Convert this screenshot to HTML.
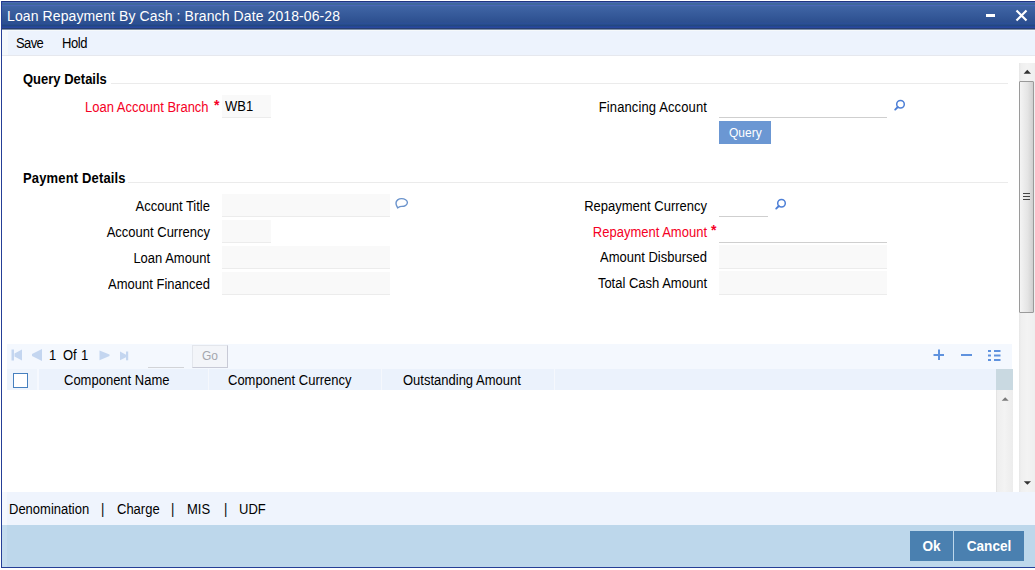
<!DOCTYPE html>
<html><head><meta charset="utf-8">
<style>
html,body{margin:0;padding:0;}
body{width:1035px;height:570px;position:relative;overflow:hidden;background:#fff;font-family:"Liberation Sans",sans-serif;font-size:13px;color:#000;-webkit-text-stroke:0;}
.a{position:absolute;white-space:nowrap;}
.t{position:absolute;white-space:nowrap;line-height:13px;font-size:13px;transform:scaleY(1.1);transform-origin:0 11px;}
.lbl{position:absolute;white-space:nowrap;line-height:13px;font-size:13px;text-align:right;transform:scaleY(1.1);transform-origin:0 11px;}
.red{color:#f50025;}
.ast{position:absolute;line-height:13px;font-size:14px;font-weight:bold;color:#f50025;}
.ro{position:absolute;background:#f9f9f9;border-bottom:1px solid #ececec;box-sizing:border-box;}
.ed{position:absolute;background:#fff;border-bottom:1px solid #cfcfcf;box-sizing:border-box;}
</style></head>
<body>
<!-- window frame -->
<div class="a" style="left:1px;top:1px;width:1034px;height:567px;background:#fff;"></div>
<!-- title bar -->
<div class="a" style="left:1px;top:1px;width:1034px;height:29px;background:linear-gradient(#1f3580 0px,#1f3580 1px,#4a6ab8 1px,#4a6ab8 2px,#3f689c 2px,#3f689c 4px,#4a66b8 4px,#4a66b8 5px,#4068a4 5px,#3f64a4 6px,#2d5090 21px,#2a4f98 23px,#254a80 24px,#214585 25px,#2848a0 26px,#2848a0 27px,#283f70 27px,#283f70 28px,#7f90a8 28px,#7f90a8 29px);"></div>
<div class="a" style="left:7px;top:9px;font-size:14px;line-height:14px;color:#fff;letter-spacing:0.1px;-webkit-text-stroke:0;">Loan Repayment By Cash : Branch Date 2018-06-28</div>
<div class="a" style="left:986px;top:14px;width:9px;height:3px;background:#fff;"></div>
<svg class="a" style="left:1015px;top:9px;" width="13" height="13" viewBox="0 0 13 13"><path d="M1.5 1.5 L11.5 11.5 M11.5 1.5 L1.5 11.5" stroke="#fff" stroke-width="2.2"/></svg>
<!-- menu bar -->
<div class="a" style="left:2px;top:30px;width:1033px;height:1px;background:#f6f9fb;"></div>
<div class="a" style="left:2px;top:31px;width:1033px;height:24px;background:#edf3fd;"></div>
<div class="a" style="left:2px;top:31px;width:6px;height:25px;background:#f4f8fb;"></div>
<div class="a" style="left:2px;top:55px;width:1033px;height:1px;background:#e6e8ee;"></div>
<div class="t" style="left:16px;top:37px;letter-spacing:-0.6px;">Save</div>
<div class="t" style="left:62px;top:37px;letter-spacing:-0.4px;">Hold</div>
<!-- left border -->
<div class="a" style="left:1px;top:1px;width:1px;height:567px;background:#253f96;"></div>
<div class="a" style="left:1px;top:567px;width:1034px;height:1px;background:#253f96;"></div>

<!-- Query Details -->
<div class="t" style="left:23px;top:73px;font-weight:bold;">Query Details</div>
<div class="a" style="left:111px;top:83px;width:897px;height:1px;background:#ebebeb;"></div>
<div class="lbl red" style="left:85px;top:101px;">Loan Account Branch</div>
<div class="ast" style="left:214px;top:99px;">*</div>
<div class="ro" style="left:222px;top:95px;width:49px;height:23px;"></div>
<div class="t" style="left:225px;top:100px;">WB1</div>

<div class="lbl" style="right:328px;top:101px;letter-spacing:0.12px;">Financing Account</div>
<div class="ed" style="left:719px;top:95px;width:168px;height:23px;"></div>
<svg class="a" style="left:891px;top:98px;" width="16" height="16" viewBox="0 0 16 16"><circle cx="9.5" cy="6.3" r="3.8" fill="none" stroke="#4d7fd6" stroke-width="1.5"/><path d="M6.8 9 L4.2 11.6" stroke="#4d7fd6" stroke-width="1.9" stroke-linecap="round"/></svg>
<div class="a" style="left:719px;top:121px;width:52px;height:23px;background:#6b97d3;"></div>
<div class="a" style="left:729px;top:127px;font-size:12px;line-height:12px;color:#fff;-webkit-text-stroke:0;">Query</div>

<!-- Payment Details -->
<div class="t" style="left:23px;top:172px;font-weight:bold;letter-spacing:0.15px;">Payment Details</div>
<div class="a" style="left:128px;top:182px;width:880px;height:1px;background:#ebebeb;"></div>

<div class="lbl" style="right:825px;top:200px;">Account Title</div>
<div class="lbl" style="right:825px;top:226px;">Account Currency</div>
<div class="lbl" style="right:825px;top:252px;">Loan Amount</div>
<div class="lbl" style="right:825px;top:278px;">Amount Financed</div>
<div class="ro" style="left:222px;top:194px;width:168px;height:23px;"></div>
<div class="ro" style="left:222px;top:220px;width:49px;height:23px;"></div>
<div class="ro" style="left:222px;top:246px;width:168px;height:23px;"></div>
<div class="ro" style="left:222px;top:272px;width:168px;height:23px;"></div>
<svg class="a" style="left:392px;top:195px;" width="18" height="16" viewBox="0 0 18 16"><path d="M5.6 12.8 C5.2 11.6 4 10.6 4 8 C4 5.6 6.6 3.6 9.6 3.6 C12.6 3.6 15.4 5.4 15.4 7.6 C15.4 9.8 12.8 11.4 9.8 11.4 C8.4 11.4 7.4 11.8 5.6 12.8 Z" fill="none" stroke="#6a93cc" stroke-width="1.4"/></svg>

<div class="lbl" style="right:328px;top:200px;">Repayment Currency</div>
<div class="lbl red" style="right:328px;top:226px;">Repayment Amount</div>
<div class="ast" style="left:711px;top:224px;">*</div>
<div class="lbl" style="right:328px;top:251px;">Amount Disbursed</div>
<div class="lbl" style="right:328px;top:277px;">Total Cash Amount</div>
<div class="ed" style="left:719px;top:194px;width:49px;height:23px;"></div>
<svg class="a" style="left:772px;top:197px;" width="16" height="16" viewBox="0 0 16 16"><circle cx="9.5" cy="6.3" r="3.8" fill="none" stroke="#4d7fd6" stroke-width="1.5"/><path d="M6.8 9 L4.2 11.6" stroke="#4d7fd6" stroke-width="1.9" stroke-linecap="round"/></svg>
<div class="ed" style="left:719px;top:220px;width:168px;height:23px;"></div>
<div class="ro" style="left:719px;top:245px;width:168px;height:24px;"></div>
<div class="ro" style="left:719px;top:271px;width:168px;height:24px;"></div>

<!-- outer scrollbar -->
<div class="a" style="left:1019px;top:63px;width:16px;height:429px;background:linear-gradient(90deg,#e6e6e6 0,#efefef 2px,#f3f3f3 50%,#efefef 100%);"></div>
<svg class="a" style="left:1022px;top:67px;" width="10" height="8" viewBox="0 0 10 8"><path d="M1.6 6.8 L5.3 2.8 L9 6.8 Z" fill="#333"/></svg>
<div class="a" style="left:1019px;top:81px;width:15px;height:232px;box-sizing:border-box;border:1px solid #9a9a9a;border-radius:1px;background:linear-gradient(90deg,#f4f4f4,#e4e4e4 60%,#cfcfcf);"></div>
<div class="a" style="left:1023px;top:193px;width:7px;height:1px;background:#444;"></div>
<div class="a" style="left:1023px;top:196px;width:7px;height:1px;background:#444;"></div>
<div class="a" style="left:1023px;top:199px;width:7px;height:1px;background:#444;"></div>
<svg class="a" style="left:1022px;top:479px;" width="10" height="8" viewBox="0 0 10 8"><path d="M1.8 2.2 L5.4 5.8 L9 2.2 Z" fill="#333"/></svg>

<!-- grid toolbar -->
<div class="a" style="left:7px;top:344px;width:1005px;height:25px;background:#f4f8fe;"></div>
<svg class="a" style="left:0px;top:340px;" width="140" height="25" viewBox="0 340 140 25">
<g fill="#c4d6f0"><rect x="11.5" y="349.5" width="2.5" height="11"/><path d="M22 349.5 L22 360.5 L14.5 356.5 L14.5 353.5 Z"/><path d="M42 349 L42 361 L32 356 L32 354 Z"/><path d="M99.5 350.5 L109.5 354.5 L109.5 356 L99.5 360.3 Z"/><path d="M120 351.5 L126.5 355 L126.5 357 L120 360.3 Z"/><rect x="126" y="351.5" width="2.2" height="8.8"/></g></svg>
<div class="t" style="left:49px;top:349px;">1</div>
<div class="t" style="left:63px;top:349px;">Of</div>
<div class="t" style="left:81px;top:349px;">1</div>
<div class="a" style="left:148px;top:345px;width:36px;height:23px;border-bottom:1px solid #d2d4d8;box-sizing:border-box;"></div>
<div class="a" style="left:192px;top:345px;width:36px;height:23px;box-sizing:border-box;border:1px solid #e3e6ec;border-right-color:#c8cad6;border-bottom-color:#c8cad6;background:#f3f5f9;"></div>
<div class="t" style="left:202px;top:350px;color:#a4a6ae;font-size:12px;">Go</div>
<svg class="a" style="left:930px;top:347px;" width="75" height="16" viewBox="0 0 75 16">
<g fill="#5f92de"><rect x="3.5" y="7" width="10.5" height="2"/><rect x="8" y="2.5" width="2" height="10.5"/><rect x="31" y="7" width="11" height="2"/>
<rect x="58" y="3" width="3" height="2"/><rect x="64" y="3" width="6.5" height="2"/><rect x="58" y="7.5" width="3" height="2"/><rect x="64" y="7.5" width="6.5" height="2"/><rect x="58" y="12" width="3" height="2"/><rect x="64" y="12" width="6.5" height="2"/></g></svg>
<!-- grid header -->
<div class="a" style="left:7px;top:369px;width:989px;height:21px;background:#ebf2fc;"></div>
<div class="a" style="left:7px;top:369px;width:30px;height:21px;background:#eef4fc;"></div>
<div class="a" style="left:37px;top:369px;width:2px;height:21px;background:#f6f9fe;"></div>
<div class="a" style="left:208px;top:369px;width:1px;height:21px;background:#f5f8fd;"></div>
<div class="a" style="left:381px;top:369px;width:1px;height:21px;background:#f5f8fd;"></div>
<div class="a" style="left:554px;top:369px;width:1px;height:21px;background:#f5f8fd;"></div>
<div class="a" style="left:13px;top:373px;width:15px;height:15px;box-sizing:border-box;border:1px solid #4680bf;background:#fff;"></div>
<div class="t" style="left:64px;top:374px;">Component Name</div>
<div class="t" style="left:228px;top:374px;">Component Currency</div>
<div class="t" style="left:403px;top:374px;">Outstanding Amount</div>
<div class="a" style="left:996px;top:369px;width:17px;height:21px;background:#c9d9e1;"></div>
<!-- inner scrollbar -->
<div class="a" style="left:996px;top:390px;width:17px;height:102px;background:linear-gradient(90deg,#e4e4e4 0,#e4e4e4 1px,#eeeeee 1px,#f3f3f3 50%,#ececec 100%);"></div>
<svg class="a" style="left:1000px;top:395px;" width="10" height="8" viewBox="0 0 10 8"><path d="M1.7 5.8 L5.2 2.3 L8.7 5.8 Z" fill="#7a7a7a"/></svg>

<!-- bottom tabs -->
<div class="a" style="left:2px;top:492px;width:1033px;height:33px;background:#eff4fd;"></div>
<div class="a" style="left:2px;top:492px;width:5px;height:33px;background:#f5f8fd;"></div>
<div class="t" style="left:9px;top:503px;">Denomination</div>
<div class="t" style="left:101px;top:503px;">|</div>
<div class="t" style="left:117px;top:503px;">Charge</div>
<div class="t" style="left:171px;top:503px;">|</div>
<div class="t" style="left:187px;top:503px;">MIS</div>
<div class="t" style="left:224px;top:503px;">|</div>
<div class="t" style="left:239px;top:503px;">UDF</div>
<!-- footer -->
<div class="a" style="left:2px;top:525px;width:1033px;height:42px;background:#bdd7eb;"></div>
<div class="a" style="left:2px;top:525px;width:5px;height:42px;background:#c4dcee;"></div>
<div class="a" style="left:910px;top:531px;width:43px;height:30px;background:#4a80b0;"></div>
<div class="a" style="left:954px;top:531px;width:70px;height:30px;background:#4a80b0;"></div>
<div class="a" style="left:910px;top:540px;width:43px;text-align:center;font-size:13.6px;line-height:14px;font-weight:bold;color:#fff;-webkit-text-stroke:0;transform:scaleY(1.1);transform-origin:0 11.7px;">Ok</div>
<div class="a" style="left:954px;top:540px;width:70px;text-align:center;font-size:13.6px;line-height:14px;font-weight:bold;color:#fff;-webkit-text-stroke:0;transform:scaleY(1.1);transform-origin:0 11.7px;">Cancel</div>
</body></html>
